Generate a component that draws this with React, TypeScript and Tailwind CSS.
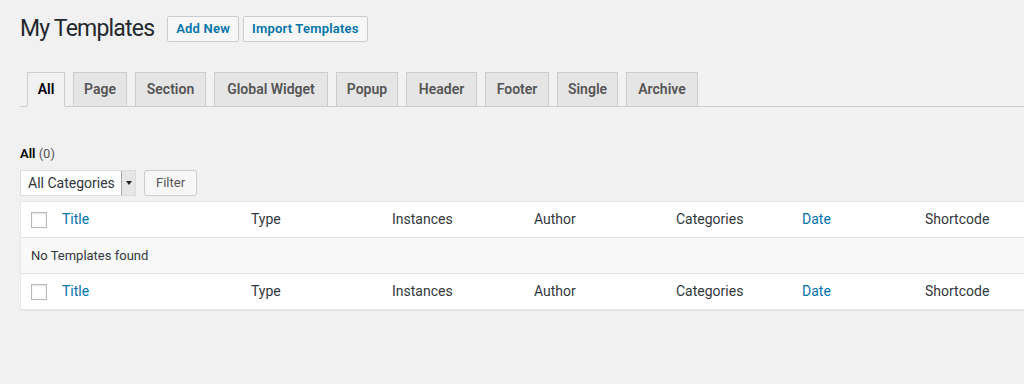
import React from "react";

const tabs: [string, number][] = [
  ["All", 38],
  ["Page", 54],
  ["Section", 71],
  ["Global Widget", 114],
  ["Popup", 62],
  ["Header", 71],
  ["Footer", 64],
  ["Single", 61],
  ["Archive", 72],
];

function HeaderRow({ top }: { top: boolean }) {
  return (
    <div
      className={`flex h-[36px] items-center bg-white text-[14px] text-[#32373c] ${
        top ? "border-b border-[#e1e1e1]" : "border-t border-[#e1e1e1]"
      }`}
    >
      <div className="flex w-[32px] shrink-0 items-center pl-[10px]">
        <div className="h-[16px] w-[16px] shrink-0 border border-[#b4b9be] bg-white shadow-[inset_0_1px_2px_rgba(0,0,0,0.1)]" />
      </div>
      <div className="w-[188px] shrink-0 pl-[9px] text-[#0073aa]">Title</div>
      <div className="w-[141px] shrink-0 pl-[10px]">Type</div>
      <div className="w-[142px] shrink-0 pl-[10px]">Instances</div>
      <div className="w-[142px] shrink-0 pl-[10px]">Author</div>
      <div className="w-[126px] shrink-0 pl-[10px]">Categories</div>
      <div className="w-[123px] shrink-0 pl-[10px] text-[#0073aa]">Date</div>
      <div className="w-[130px] shrink-0 pl-[10px]">Shortcode</div>
    </div>
  );
}

export default function App() {
  return (
    <div
      className="h-[384px] w-[1024px] overflow-hidden bg-[#f1f1f1] pl-[20px]"
      style={{ fontFamily: "Roboto, 'Liberation Sans', sans-serif" }}
    >
      {/* Title bar */}
      <div className="flex items-center pt-[15px]">
        <h1 className="text-[23px] font-normal leading-[28px] tracking-[-0.8px] text-[#23282d]">My Templates</h1>
        <button className="ml-[13px] h-[26px] rounded-[2px] border border-[#ccc] bg-[#f7f7f7] px-[8px] text-[13px] font-semibold tracking-[0.2px] text-[#0073aa]">
          Add New
        </button>
        <button className="ml-[4px] h-[26px] rounded-[2px] border border-[#ccc] bg-[#f7f7f7] px-[8px] text-[13px] font-semibold tracking-[0.2px] text-[#0073aa]">
          Import Templates
        </button>
      </div>

      {/* Tabs */}
      <div className="mt-[29px] flex w-[1100px] border-b border-[#ccc] pl-[7px]">
        {tabs.map(([t, w], i) => (
          <div
            key={t}
            style={{ width: w }}
            className={`-mb-px ml-[8px] first:ml-0 flex h-[35px] items-center justify-center border border-[#ccc] text-[14px] font-semibold ${
              i === 0
                ? "border-b-[#f1f1f1] bg-[#f1f1f1] text-black"
                : "bg-[#e5e5e5] text-[#555]"
            }`}
          >
            {t}
          </div>
        ))}
      </div>

      {/* Status */}
      <div className="mt-[38px] text-[13px] leading-[18px]">
        <span className="font-semibold text-black">All</span>{" "}
        <span className="text-[#555]">(0)</span>
      </div>

      {/* Filters */}
      <div className="mt-[7px] flex items-center">
        <div className="flex h-[26px] w-[116px] items-center border border-[#ddd] bg-white">
          <span className="flex-1 pl-[7px] text-[14px] text-[#32373c]">All Categories</span>
          <span className="flex h-full w-[14px] items-center justify-center border-l border-[#aaa] bg-[#e6e6e6]">
            <svg width="6" height="4" viewBox="0 0 6 4">
              <path d="M0 0 L6 0 L3 4 Z" fill="#222" />
            </svg>
          </span>
        </div>
        <button className="ml-[8px] h-[26px] rounded-[3px] border border-[#ccc] bg-[#f7f7f7] px-[11px] text-[13px] text-[#555]">
          Filter
        </button>
      </div>

      {/* Table */}
      <div className="mt-[5px] w-[1040px] border border-[#e5e5e5] bg-white shadow-[0_1px_1px_rgba(0,0,0,0.04)]">
        <HeaderRow top />
        <div className="flex h-[35px] items-center bg-[#f9f9f9] pl-[10px] text-[13px] text-[#32373c]">
          No Templates found
        </div>
        <HeaderRow top={false} />
      </div>
    </div>
  );
}
